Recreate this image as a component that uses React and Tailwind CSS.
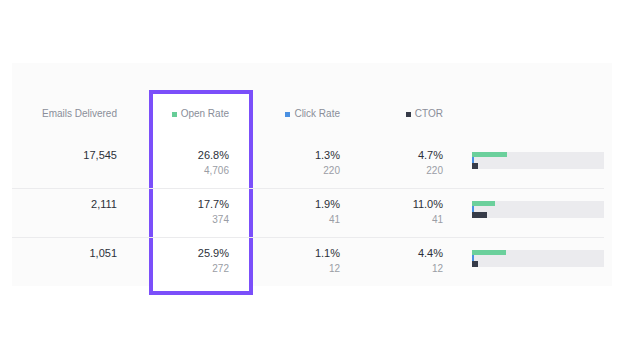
import React from "react";

const rows = [
  { delivered: "17,545", open: 26.8, openN: "4,706", click: 1.3, clickN: "220", ctor: 4.7, ctorN: "220" },
  { delivered: "2,111", open: 17.7, openN: "374", click: 1.9, clickN: "41", ctor: 11.0, ctorN: "41" },
  { delivered: "1,051", open: 25.9, openN: "272", click: 1.1, clickN: "12", ctor: 4.4, ctorN: "12" },
];

const TRACK = 132;

function Cell({ main, sub, pr }) {
  return (
    <div className={`flex flex-col items-end ${pr}`}>
      <div className="text-[11px] leading-[14px] text-[#2c3039]">{main}</div>
      {sub !== undefined && (
        <div className="mt-[3px] text-[10px] leading-[12px] text-[#9a9da5]">{sub}</div>
      )}
    </div>
  );
}

export default function App() {
  return (
    <div
      className="w-[624px] h-[351px] bg-white pt-[63px] pl-[12px]"
      style={{ fontFamily: '"Liberation Sans", Arial, sans-serif' }}
    >
      <div className="relative w-[600px] h-[223px] bg-[#fbfbfb] pr-[8px]">
        <div className="absolute left-[137px] top-[27px] w-[104px] h-[205px] border-[4px] border-[#7b4ffa] bg-white" />
        <div className="relative">
          <div className="grid grid-cols-[137px_104px_107px_103px_141px] items-start h-[76px] pt-[44px] text-[10px] leading-[14px] text-[#8a8e99]">
            <div className="text-right pr-[32px] h-[14px]">Emails Delivered</div>
            <div className="flex items-center justify-end gap-[4px] pr-[24px] h-[14px]">
              <span className="w-[5px] h-[5px] bg-[#67cd98]" />
              <span>Open Rate</span>
            </div>
            <div className="flex items-center justify-end gap-[4px] pr-[20px] h-[14px]">
              <span className="w-[5px] h-[5px] bg-[#4a90e2]" />
              <span>Click Rate</span>
            </div>
            <div className="flex items-center justify-end gap-[4px] pr-[20px] h-[14px]">
              <span className="w-[5px] h-[5px] bg-[#363b48]" />
              <span>CTOR</span>
            </div>
            <div />
          </div>
          {rows.map((r, i) => (
            <div
              key={i}
              className={`grid grid-cols-[137px_104px_107px_103px_141px] h-[49px] border-t pt-[8px] ${
                i === 0 ? "border-transparent" : "border-[#ebebed]"
              }`}
            >
              <Cell main={r.delivered} pr="pr-[32px]" />
              <Cell main={`${r.open.toFixed(1)}%`} sub={r.openN} pr="pr-[24px]" />
              <Cell main={`${r.click.toFixed(1)}%`} sub={r.clickN} pr="pr-[20px]" />
              <Cell main={`${r.ctor.toFixed(1)}%`} sub={r.ctorN} pr="pr-[20px]" />
              <div className="pl-[9px] pt-[4px]">
                <div className="w-[132px] h-[17px] bg-[#ebebee] flex flex-col">
                  <div className="h-[5px] bg-[#6bd09c]" style={{ width: Math.round((r.open / 100) * TRACK) }} />
                  <div className="h-[6px] bg-[#4a90e2]" style={{ width: 2 }} />
                  <div className="h-[6px] bg-[#363b48]" style={{ width: Math.max(6, Math.round((r.ctor / 100) * TRACK)) }} />
                </div>
              </div>
            </div>
          ))}
        </div>
      </div>
    </div>
  );
}
